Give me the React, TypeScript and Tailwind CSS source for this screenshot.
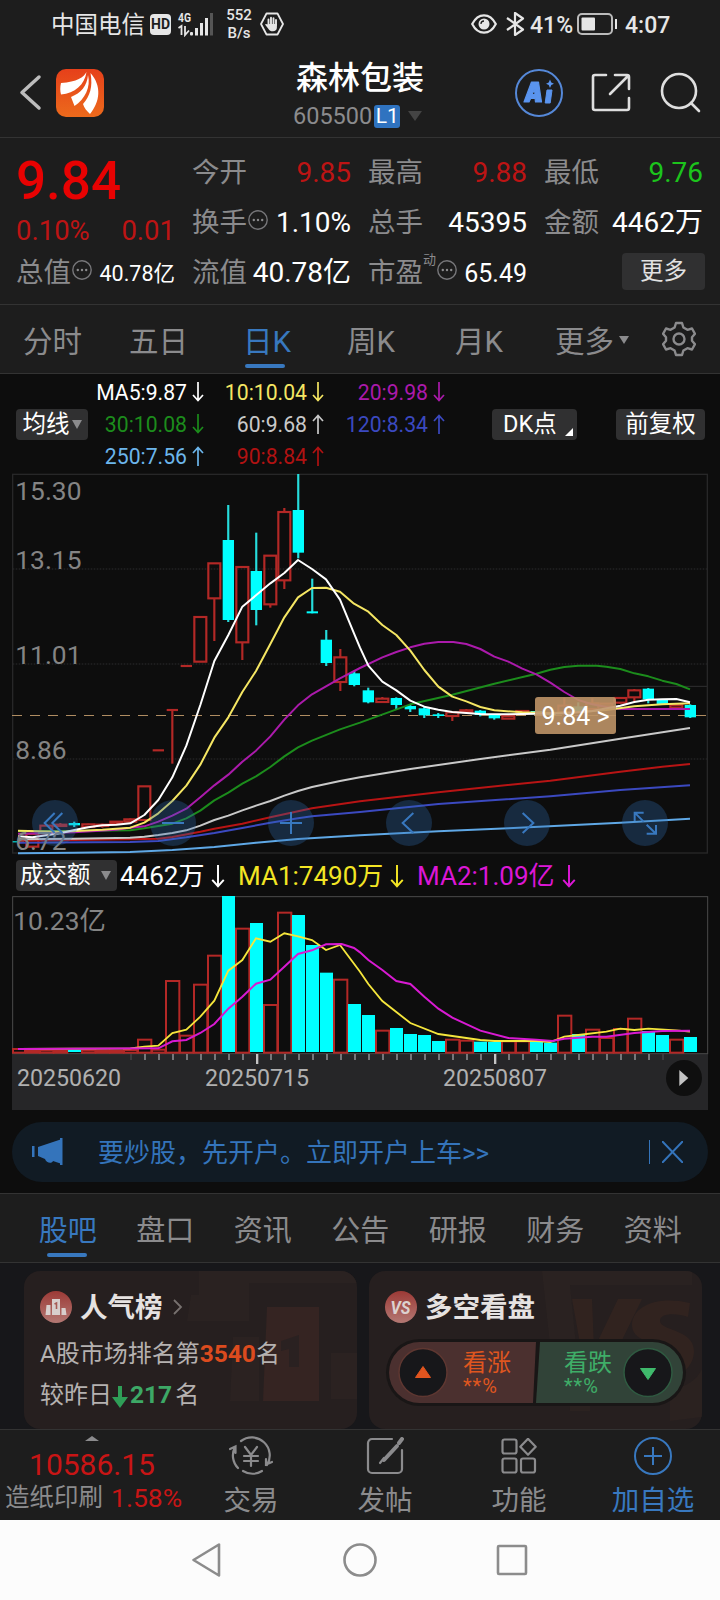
import React from "react";

type Pt = [number, number];

// Chart coordinates: three units per pixel, one candle every 42 units.
const X0 = 55;
const STEP = 42;
const cx = (i: number) => X0 + STEP * i;

const RED = "#b32826";
const CYAN = "#00ffff";

// [index, up, wickTop, bodyTop, bodyBottom, wickBottom]
const candles: [number, boolean, number, number, number, number][] = [
  [0, false, 1129, 1129, 1132, 1132],
  [1, true, 1105, 1107, 1145, 1148],
  [2, true, 1082, 1082, 1105, 1108],
  [3, true, 1074, 1079, 1083, 1086],
  [4, false, 1070, 1074, 1081, 1086],
  [5, true, 1076, 1078, 1086, 1088],
  [6, true, 1076, 1079, 1083, 1088],
  [7, true, 1068, 1070, 1076, 1078],
  [8, true, 1060, 1063, 1070, 1072],
  [9, true, 964, 964, 1065, 1065],
  [10, true, 856, 856, 856, 856],
  [11, true, 735, 735, 735, 896],
  [12, true, 603, 603, 603, 603],
  [13, true, 456, 456, 590, 590],
  [14, true, 295, 295, 400, 528],
  [15, false, 120, 225, 465, 471],
  [16, true, 306, 306, 532, 585],
  [17, false, 203, 318, 435, 481],
  [18, true, 272, 272, 418, 428],
  [19, true, 129, 141, 346, 372],
  [20, false, 27, 135, 263, 280],
  [21, false, 341, 439, 445, 445],
  [22, false, 495, 524, 594, 603],
  [23, true, 552, 577, 651, 678],
  [24, false, 618, 625, 660, 664],
  [25, false, 668, 676, 712, 715],
  [26, true, 696, 701, 711, 713],
  [27, false, 697, 699, 720, 732],
  [28, false, 720, 723, 733, 741],
  [29, false, 724, 730, 751, 759],
  [30, false, 744, 748, 753, 759],
  [31, true, 740, 742, 753, 768],
  [32, true, 732, 736, 741, 743],
  [33, false, 735, 737, 750, 754],
  [34, false, 747, 749, 760, 764],
  [35, true, 752, 753, 761, 762],
  [36, true, 736, 738, 742, 744],
  [37, false, 736, 738, 746, 748],
  [38, false, 742, 745, 750, 753],
  [39, true, 698, 722, 742, 745],
  [40, false, 712, 724, 738, 742],
  [41, true, 700, 715, 732, 735],
  [42, true, 715, 716, 724, 728],
  [43, true, 698, 699, 713, 716],
  [44, true, 672, 676, 697, 710],
  [45, false, 669, 671, 703, 715],
  [46, false, 705, 705, 718, 720],
  [47, true, 715, 720, 728, 733],
  [48, false, 718, 720, 757, 759],
];

const lines: { color: string; pts: Pt[] }[] = [
  {
    color: "#5fa8e6",
    pts: [[54, 1165], [223, 1163], [390, 1161], [517, 1155], [643, 1146], [768, 1133], [894, 1122], [1080, 1111], [1315, 1099], [1525, 1090], [1861, 1073], [2070, 1061]],
  },
  {
    color: "#3b49c0",
    pts: [[54, 1133], [390, 1131], [475, 1128], [559, 1117], [643, 1104], [727, 1089], [811, 1073], [894, 1060], [936, 1054], [1080, 1041], [1315, 1017], [1651, 994], [1861, 975], [2070, 961]],
  },
  {
    color: "#b81414",
    pts: [[54, 1127], [390, 1123], [475, 1121], [517, 1116], [601, 1100], [643, 1091], [727, 1076], [811, 1057], [894, 1039], [936, 1030], [1080, 1009], [1315, 982], [1651, 947], [1861, 920], [1987, 905], [2070, 897]],
  },
  {
    color: "#c9c9c9",
    pts: [[54, 1123], [223, 1121], [390, 1118], [433, 1115], [475, 1110], [517, 1104], [559, 1096], [601, 1082], [643, 1065], [685, 1052], [727, 1036], [768, 1022], [811, 1008], [853, 992], [894, 978], [936, 966], [1020, 948], [1080, 937], [1231, 912], [1441, 882], [1651, 854], [1861, 821], [1987, 802], [2070, 789]],
  },
  {
    color: "#1c8c1c",
    pts: [[54, 1099], [223, 1098], [391, 1096], [433, 1090], [475, 1083], [517, 1076], [559, 1060], [601, 1037], [643, 1006], [685, 983], [727, 956], [768, 934], [811, 906], [853, 874], [894, 847], [936, 827], [1020, 793], [1080, 773], [1231, 718], [1357, 689], [1483, 656], [1609, 626], [1651, 614], [1693, 606], [1735, 602], [1790, 602], [1819, 605], [1861, 612], [1903, 625], [1945, 634], [1987, 647], [2029, 657], [2070, 673]],
  },
  {
    color: "#ab1aab",
    pts: [[54, 1106], [223, 1102], [349, 1094], [391, 1088], [433, 1084], [475, 1070], [517, 1052], [559, 1031], [601, 997], [643, 961], [685, 929], [727, 890], [768, 857], [811, 814], [853, 764], [894, 721], [936, 688], [978, 664], [1020, 640], [1080, 609], [1147, 577], [1189, 561], [1231, 547], [1273, 536], [1315, 531], [1360, 531], [1399, 537], [1441, 552], [1483, 575], [1525, 590], [1567, 611], [1609, 628], [1651, 653], [1693, 681], [1735, 705], [1777, 718], [1819, 726], [1861, 732], [2070, 732]],
  },
  {
    color: "#f5e663",
    pts: [[54, 1097], [181, 1100], [307, 1094], [391, 1088], [433, 1073], [475, 1045], [517, 1008], [559, 962], [601, 899], [643, 818], [685, 757], [727, 681], [768, 618], [811, 537], [853, 457], [894, 397], [936, 369], [978, 368], [1020, 380], [1062, 416], [1105, 440], [1147, 480], [1189, 510], [1231, 557], [1273, 615], [1315, 665], [1357, 695], [1399, 709], [1441, 726], [1483, 736], [1567, 742], [1651, 744], [1735, 742], [1819, 735], [1903, 724], [1987, 718], [2070, 715]],
  },
  {
    color: "#ffffff",
    pts: [[54, 1114], [97, 1117], [139, 1111], [181, 1105], [223, 1095], [265, 1087], [307, 1081], [349, 1079], [391, 1075], [433, 1050], [475, 1005], [517, 937], [559, 842], [601, 720], [643, 588], [685, 510], [727, 425], [768, 391], [811, 355], [853, 324], [894, 285], [936, 312], [978, 343], [1020, 404], [1062, 505], [1080, 548], [1105, 602], [1147, 650], [1189, 676], [1231, 707], [1273, 725], [1315, 734], [1357, 741], [1441, 747], [1525, 748], [1609, 746], [1693, 745], [1777, 738], [1861, 722], [1903, 711], [1945, 704], [1987, 703], [2029, 702], [2070, 712]],
  },
];

// [top, up]
const volumes: [number, boolean][] = [
  [582, true], [587, true], [586, true], [587, true], [584, false], [586, true], [587, true],
  [587, true], [585, true], [554, true], [584, true], [378, true], [542, true], [389, true],
  [302, true], [123, false], [221, true], [204, false], [450, true], [173, true], [180, false],
  [270, false], [353, false], [374, true], [447, false], [480, false], [527, true], [519, false],
  [537, false], [540, false], [558, false], [554, true], [557, true], [560, false], [561, false],
  [559, true], [559, true], [557, false], [563, false], [482, true], [537, false], [524, true],
  [549, true], [522, true], [491, true], [528, false], [540, false], [554, true], [546, false],
];

const volYellow: Pt[] = [[54, 582], [391, 580], [433, 575], [475, 572], [517, 534], [559, 524], [601, 485], [643, 437], [685, 347], [727, 315], [768, 250], [811, 260], [853, 235], [894, 244], [936, 255], [978, 285], [1020, 270], [1080, 350], [1105, 387], [1147, 438], [1189, 471], [1231, 504], [1315, 537], [1399, 549], [1441, 555], [1483, 558], [1609, 558], [1651, 561], [1693, 545], [1735, 540], [1819, 530], [1861, 521], [1903, 525], [1945, 521], [2029, 526], [2070, 530]];
const volMagenta: Pt[] = [[54, 582], [475, 580], [517, 559], [559, 555], [601, 534], [643, 507], [685, 461], [727, 425], [768, 386], [811, 374], [853, 335], [894, 297], [936, 286], [978, 268], [1025, 267], [1062, 279], [1080, 292], [1105, 315], [1147, 345], [1189, 378], [1231, 387], [1273, 425], [1315, 461], [1357, 488], [1441, 527], [1525, 549], [1609, 554], [1657, 558], [1693, 551], [1777, 545], [1819, 545], [1903, 534], [1987, 528], [2070, 527]];

const toPoints = (pts: Pt[]) => pts.map((p) => p.join(",")).join(" ");

function StatusBar() {
  return (
    <div className="flex h-12 items-center pl-[51px] text-[#e6e6e6]">
      <span className="w-[99px] pt-[3px] text-[23.500px] leading-none">中国电信</span>
      <span className="flex h-[21px] w-[21px] items-center justify-center rounded-[4px] bg-[#e6e6e6] text-[14px] font-bold leading-none text-[#1d1d1d]">HD</span>
      <svg className="ml-[6px]" width="37" height="26" viewBox="0 0 37 26" fill="#e6e6e6">
        <text x="1" y="11" fontSize="13" fontWeight="700" textLength="13" lengthAdjust="spacingAndGlyphs">4G</text>
        <path d="M1.500 17l3-2v9M8 15v9l4-4.500" fill="none" stroke="#e6e6e6" strokeWidth="1.800" />
        <rect x="13" y="21" width="3" height="3.500" rx="1" />
        <rect x="18" y="17" width="3" height="7.500" />
        <rect x="23" y="12" width="3" height="12.500" />
        <rect x="28" y="7" width="3" height="17.500" />
        <rect x="33" y="2" width="3" height="22.500" fill="#555" />
      </svg>
      <div className="ml-[8px] w-[34px] text-center text-[15px] font-medium leading-[18px]">
        <div>552</div>
        <div>B/s</div>
      </div>
      <svg className="ml-[4px]" width="24" height="24" viewBox="0 0 24 24">
        <path d="M6.500 1.500h11L23 12l-5.500 10.500h-11L1 12z" fill="none" stroke="#e6e6e6" strokeWidth="1.800" strokeLinejoin="round" />
        <path d="M8.500 13V7.500M11 12V5.800M13.500 12V6.200M16 13V8" stroke="#e6e6e6" strokeWidth="1.900" strokeLinecap="round" />
        <path d="M7.600 12h9.300v3.500c0 2.500-1.600 3.800-4 3.800-2.200 0-3.400-.8-4.600-2.600L5 12.600c.6-1 1.700-.8 2.600.2z" fill="#e6e6e6" />
      </svg>
      <svg className="ml-[187px]" width="26" height="20" viewBox="0 0 26 20" fill="none" stroke="#e6e6e6" strokeWidth="2.200">
        <path d="M1.200 10C4 4.500 8 1.300 13 1.300S22 4.500 24.800 10C22 15.500 18 18.700 13 18.700S4 15.500 1.200 10z" />
        <circle cx="13" cy="10" r="5.500" fill="#e6e6e6" stroke="none" />
        <path d="M10 10a3 3 0 013-3" stroke="#1d1d1d" strokeWidth="1.300" />
      </svg>
      <svg className="ml-[8px]" width="20" height="24" viewBox="0 0 20 24" fill="none" stroke="#e6e6e6" strokeWidth="2.200">
        <path d="M2 6l16 11.500L10 23V1l8 5.500L2 18" strokeLinejoin="round" />
      </svg>
      <span className="ml-[5px] w-[47px] pt-[3px] text-[23px] font-medium leading-none">41%</span>
      <svg width="41" height="22" viewBox="0 0 41 22" fill="none" stroke="#e6e6e6">
        <rect x="1" y="1" width="34" height="20" rx="4" strokeWidth="2" stroke="#bbb" />
        <rect x="4.500" y="4.500" width="13.500" height="13" rx="1" fill="#e6e6e6" stroke="none" />
        <path d="M39 6v10" strokeWidth="2" />
      </svg>
      <span className="ml-[7px] pt-[3px] text-[23px] font-medium leading-none">4:07</span>
    </div>
  );
}

function Header() {
  return (
    <div className="flex h-[90px] items-start border-b border-[#333] text-[#ddd]">
      <svg className="ml-[19px] mt-[26px]" width="23" height="37" viewBox="0 0 23 37" fill="none" stroke="#bdbdbd" strokeWidth="3.500" strokeLinecap="round" strokeLinejoin="round">
        <path d="M20 3L3 18.500 20 34" />
      </svg>
      <svg className="ml-[14px] mt-[21px]" width="48" height="48" viewBox="0 0 48 48">
        <defs>
          <linearGradient id="logo" x1="0" y1="0" x2="0" y2="1">
            <stop offset="0" stopColor="#e6401a" />
            <stop offset="1" stopColor="#ec6a1c" />
          </linearGradient>
        </defs>
        <rect width="48" height="48" rx="10" fill="url(#logo)" />
        <path d="M30.500 3C28 8 21 13 5 14 4 18 4 22 5 25.500 19 24 28.500 16 30.500 3z" fill="#fff" />
        <path d="M32 6C31 17 25 24 15 28l3.500 9C29 30 35 18 32 6z" fill="#fff" />
        <path d="M34.500 4c2.500 14-.5 23-7.500 31 1 4 4 7 7 10 10-12 12-28 .5-41z" fill="#fff" />
      </svg>
      <div className="ml-[156px] flex w-[200px] flex-col items-center pt-[12px]">
        <div className="text-[32px] font-medium leading-[36px] text-white">森林包装</div>
        <div className="mt-[7px] flex h-[26px] w-[134px] items-center">
          <span className="pt-[2px] text-[23.500px] leading-none text-[#8b8b8d]">605500</span>
          <span className="ml-[2px] flex h-[23px] w-[26px] items-center justify-center rounded-[3px] bg-[#2f73c0] text-[21px] leading-none text-white">L1</span>
          <svg className="ml-[8px] shrink-0" width="14" height="10" viewBox="0 0 14 10"><path d="M0 0h14L7 10z" fill="#444" /></svg>
        </div>
      </div>
      <svg className="ml-[55px] mt-[21px]" width="48" height="48" viewBox="0 0 48 48">
        <circle cx="24" cy="24" r="23" fill="none" stroke="#5588d8" strokeWidth="2" />
        <path d="M9 33l7.500-20h7l3 20h-6l-.4-3.500h-4.500L14 33zM17 25.500h3l-.5-5z" fill="#5a94ee" stroke="#5a94ee" strokeWidth="1.200" strokeLinejoin="round" />
        <path d="M32 21h5l-1.800 13h-5z" fill="#5a94ee" stroke="#5a94ee" strokeWidth="1" strokeLinejoin="round" />
        <path d="M35 10.500l1.300 3L39 14.800l-2.700 1.300L35 19l-1.300-2.900L31 14.800l2.700-1.300z" fill="#5a94ee" />
      </svg>
      <svg className="ml-[28px] mt-[25px]" width="40" height="40" viewBox="0 0 40 40" fill="none" stroke="#dedede" strokeWidth="2.600" strokeLinecap="round">
        <path d="M15 2H4a2 2 0 00-2 2v31a2 2 0 002 2h32a2 2 0 002-2V25M24 2h12a2 2 0 012 2v12M37 3L19 21" />
      </svg>
      <svg className="ml-[29px] mt-[24px]" width="42" height="42" viewBox="0 0 42 42" fill="none" stroke="#dedede" strokeWidth="2.600" strokeLinecap="round">
        <circle cx="19" cy="19" r="17" />
        <path d="M31 31l8 8" />
      </svg>
    </div>
  );
}

function Info() {
  return (
    <svg width="20" height="20" viewBox="0 0 20 20" className="mx-[1px] mb-[7px] shrink-0">
      <circle cx="10" cy="10" r="9.200" fill="none" stroke="#77777a" strokeWidth="1.400" />
      <circle cx="5.800" cy="10" r="1.200" fill="#8b8b8d" />
      <circle cx="10" cy="10" r="1.200" fill="#8b8b8d" />
      <circle cx="14.200" cy="10" r="1.200" fill="#8b8b8d" />
    </svg>
  );
}

function Field({ label, value, tone = "text-white", info = false, sup, small = false }: { label: string; value: string; tone?: string; info?: boolean; sup?: string; small?: boolean }) {
  return (
    <div className="flex h-[50px] items-center whitespace-nowrap leading-none">
      <span className="-ml-px text-[27.500px] text-[#8b8b8d]">{label}</span>
      {sup && <span className="mb-[28px] text-[13px] text-[#8b8b8d]">{sup}</span>}
      {info && <Info />}
      <span className={`ml-auto ${small ? "text-[25px]" : "text-[28px]"} ${tone}`}>{value}</span>
    </div>
  );
}

function Quote() {
  return (
    <div className="grid h-[167px] grid-cols-[159px_158px_158px_158px] gap-x-[18px] border-b border-[#333] pl-4 pt-[10px]">
      <div className="leading-none">
        <div className="flex h-[66px] items-center pt-px text-[53px] font-medium text-[#e80202]">9.84</div>
        <div className="flex h-[34px] items-center justify-between text-[27.500px] text-[#bd1414]">
          <span>0.10%</span>
          <span>0.01</span>
        </div>
        <div className="flex h-[50px] items-center whitespace-nowrap">
          <span className="text-[27.500px] text-[#8b8b8d]">总值</span>
          <Info />
          <span className="ml-auto pt-[2px] text-[21.500px] text-white">40.78亿</span>
        </div>
      </div>
      <div>
        <Field label="今开" value="9.85" tone="text-[#bd1414]" />
        <Field label="换手" value="1.10%" info />
        <Field label="流值" value="40.78亿" />
      </div>
      <div>
        <Field label="最高" value="9.88" tone="text-[#bd1414]" />
        <Field label="总手" value="45395" />
        <Field label="市盈" value="65.49" info sup="动" small />
      </div>
      <div>
        <Field label="最低" value="9.76" tone="text-[#1cc41c]" />
        <Field label="金额" value="4462万" />
        <div className="ml-[77px] mt-[5px] flex h-[37px] w-[83px] items-center justify-center rounded-[4px] bg-[#303031] pt-px text-[23.500px] leading-none text-[#e2e2e2]">更多</div>
      </div>
    </div>
  );
}

function PeriodTabs() {
  return (
    <div className="flex h-[69px] items-start border-b border-[#333] pl-[23px] pt-[17px] text-[29.500px] leading-[40px] text-[#8b8b8d]">
      <span className="w-[106px]">分时</span>
      <span className="w-[114px]">五日</span>
      <span className="relative w-[104px] text-[#3878bf]">
        日K
        <i className="absolute left-[2px] top-[42px] h-[4px] w-[40px] rounded-full bg-[#3878bf]" />
      </span>
      <span className="w-[108px]">周K</span>
      <span className="w-[100px]">月K</span>
      <span className="flex w-[107px] items-center">
        更多
        <svg className="mb-[4px] ml-[5px]" width="10" height="8" viewBox="0 0 10 8"><path d="M0 0h10L5 8z" fill="#8b8b8d" /></svg>
      </span>
      <svg className="-mt-px" width="34" height="36" viewBox="0 0 34 36" fill="none" stroke="#8b8b8d" strokeWidth="2.400" strokeLinejoin="round">
        <path d="M14 2h6l1.400 4.500 4 2.300L30 7.500l3 5.300-3 3.500v3.400l3 3.500-3 5.300-4.600-1.300-4 2.300L20 34h-6l-1.400-4.500-4-2.300L4 28.500l-3-5.300 3-3.500v-3.400l-3-3.500 3-5.300 4.600 1.300 4-2.300z" />
        <circle cx="17" cy="18" r="5.500" />
      </svg>
    </div>
  );
}

function Arrow({ up = false, h = 20 }: { up?: boolean; h?: number }) {
  return (
    <svg width={h > 20 ? 14 : 12} height={h} viewBox="0 0 12 20" fill="none" stroke="currentColor" strokeWidth="1.700" className="shrink-0">
      <path d={up ? "M6 20V1.500M1 7l5-5.500L11 7" : "M6 0v18.500M1 13l5 5.500 5-5.500"} />
    </svg>
  );
}

function Ma({ text, up = false, tone }: { text: string; up?: boolean; tone: string }) {
  return (
    <span className={`flex items-center justify-end gap-[5px] ${tone}`}>
      <span className="pt-px">{text}</span>
      <Arrow up={up} />
    </span>
  );
}

function MaLegend() {
  return (
    <div className="flex h-[100px] items-center pl-4 leading-none">
      <div className="flex h-[31px] w-[72px] items-center justify-center gap-[2px] rounded-[4px] bg-[#303031] pt-px text-[23.500px] text-white">
        均线
        <svg width="10" height="9" viewBox="0 0 10 9"><path d="M0 0h10L5 9z" fill="#8b8b8d" /></svg>
      </div>
      <div className="grid h-[97px] grid-cols-[116px_120px_121px] grid-rows-3 text-[21.200px]">
        <Ma text="MA5:9.87" tone="text-white" />
        <Ma text="10:10.04" tone="text-[#f5e663]" />
        <Ma text="20:9.98" tone="text-[#ab1aab]" />
        <Ma text="30:10.08" tone="text-[#1c8c1c]" />
        <Ma text="60:9.68" up tone="text-[#c9c9c9]" />
        <Ma text="120:8.34" up tone="text-[#3b49c0]" />
        <Ma text="250:7.56" up tone="text-[#6cb6ec]" />
        <Ma text="90:8.84" up tone="text-[#b01212]" />
      </div>
      <div className="ml-[47px] flex h-[31px] w-[85px] items-center rounded-[4px] bg-[#303031] pl-[11px] pt-px text-[23.500px] text-white">
        DK点
        <svg className="ml-[8px] mt-[14px]" width="8" height="8" viewBox="0 0 9 9"><path d="M9 0v9H0z" fill="#fff" /></svg>
      </div>
      <div className="ml-[39px] flex h-[31px] w-[89px] items-center justify-center rounded-[4px] bg-[#303031] pt-px text-[23.500px] text-white">前复权</div>
    </div>
  );
}

const priceLabels: [string, number][] = [["15.30", 104], ["13.15", 311], ["11.01", 596], ["8.86", 881], ["6.72", 1156]];

function CandleChart() {
  return (
    <div className="relative h-[380px]">
      <svg className="block overflow-visible" width="720" height="380" viewBox="0 27 2160 1140">
        {[312, 597, 882].map((y) => (
          <line key={y} x1="38" x2="2122" y1={y} y2={y} stroke="#2d2d2e" strokeWidth="3" strokeDasharray="5 4" />
        ))}
        <line x1="1080" x2="2122" y1="664" y2="664" stroke="#303031" strokeWidth="3" />
        <rect x="38" y="28" width="2084" height="1136" fill="none" stroke="#272728" strokeWidth="4" />
        <line x1="36" x2="2122" y1="751.500" y2="751.500" stroke="#b08d62" strokeWidth="3.500" strokeDasharray="30 24" />
        {candles.map(([i, up, hi, top, bot, lo]) => {
          const x = cx(i);
          if (up) {
            const flat = bot - top < 3;
            return (
              <g key={i} stroke={RED} strokeWidth="6.500" fill="none">
                {hi < top && <line x1={x} x2={x} y1={hi} y2={top} />}
                {flat ? <line x1={x - 17} x2={x + 17} y1={top} y2={top} /> : <rect x={x - 18} y={top} width="36" height={bot - top} />}
                {lo > bot && <line x1={x} x2={x} y1={bot} y2={lo} />}
              </g>
            );
          }
          return (
            <g key={i} fill={CYAN}>
              <rect x={x - 3.5} y={hi} width="6.500" height={lo - hi} fill="#26dcdc" />
              <rect x={x - 17} y={top} width="34" height={bot - top} />
            </g>
          );
        })}
        {lines.map((l) => (
          <polyline key={l.color} points={toPoints(l.pts)} fill="none" stroke={l.color} strokeWidth="6" strokeLinejoin="round" />
        ))}
        {priceLabels.map(([t, y]) => (
          <text key={t} x="46" y={y} fontSize="79" fill="#848484">{t}</text>
        ))}
        {[165, 519, 873, 1227, 1581, 1935].map((x) => (
          <circle key={x} cx={x} cy="1074" r="69" fill="#2e6eb4" fillOpacity="0.3" />
        ))}
        <g fill="none" stroke="#3878bf" strokeWidth="6">
          <path d="M164 1044l-30 30 30 30M187 1044l-30 30 30 30M486 1074h66M840 1074h66M873 1041v66M1240 1044l-32 30 32 30M1568 1044l32 30-32 30" />
          <path d="M1904 1068v-25h27M1904 1043l27 27M1968 1080v26h-28M1968 1106l-28-27" />
        </g>
      </svg>
      <div className="absolute left-[535px] top-[223px] flex h-[37px] w-[81px] items-center justify-center rounded-[3px] bg-[#be9467]/90 pt-px text-[25px] leading-none text-white">
        9.84 &gt;
      </div>
    </div>
  );
}

function VolumeLegend() {
  return (
    <div className="flex h-[42px] items-center whitespace-nowrap pl-[16px] text-[26px] leading-none">
      <div className="flex h-[31px] w-[101px] items-center gap-[10px] rounded-[4px] bg-[#303031] pl-[4px] pt-px text-[23.500px] text-white">
        成交额
        <svg width="10" height="9" viewBox="0 0 10 9"><path d="M0 0h10L5 9z" fill="#8b8b8d" /></svg>
      </div>
      <span className="ml-[3px] flex w-[118px] items-center gap-[7px] pt-[2px] text-white">4462万<Arrow h={23} /></span>
      <span className="flex w-[179px] items-center gap-[7px] pt-[2px] text-[#f3e524]">MA1:7490万<Arrow h={23} /></span>
      <span className="flex items-center gap-[7px] pt-[2px] text-[#dc17d6]">MA2:1.09亿<Arrow h={23} /></span>
    </div>
  );
}

function VolumeChart() {
  const ticks = Array.from({ length: 39 }, (_, k) => 393 + 42 * k);
  return (
    <svg className="block" width="720" height="214" viewBox="0 123 2160 642">
      <rect x="36" y="597" width="2096" height="168" fill="#262628" />
      <rect x="2124" y="597" width="36" height="168" fill="#0d0d0d" />
      <rect x="38" y="125" width="2085" height="471" fill="none" stroke="#4a4a4a" strokeWidth="3" />
      {volumes.map(([top, up], i) => {
        const x = cx(i);
        return up ? (
          <rect key={i} x={Math.max(x - 19, 39)} y={top} width={x - 19 < 39 ? 36 : 40} height={593 - top} fill="none" stroke={RED} strokeWidth="6" />
        ) : (
          <rect key={i} x={x - 19} y={top} width="39" height={591 - top} fill={CYAN} />
        );
      })}
      <polyline points={toPoints(volYellow)} fill="none" stroke="#f5e63c" strokeWidth="5.500" />
      <polyline points={toPoints(volMagenta)} fill="none" stroke="#d81ad2" strokeWidth="6" />
      <text x="40" y="226" fontSize="79" fill="#848484">10.23亿</text>
      {ticks.map((x) => {
        const major = x === 771 || x === 1485;
        return <rect key={x} x={x - 3} y="597" width={major ? 7 : 6} height={major ? 30 : 18} fill={major ? "#c4c4c4" : x === 393 || x === 1989 ? "#3c3c3e" : "#77777a"} />;
      })}
      <g fontSize="69.500" fill="#b0b0b0">
        <text x="51" y="692">20250620</text>
        <text x="615" y="692">20250715</text>
        <text x="1329" y="692">20250807</text>
      </g>
      <circle cx="2052" cy="669" r="54" fill="#0f0f0f" />
      <path d="M2038 645v48l27-24z" fill="#c4c4c4" />
    </svg>
  );
}

function Banner() {
  return (
    <div className="flex h-[83px] items-start px-3 pt-[12px]">
      <div className="flex h-[60px] w-full items-center rounded-full bg-[#111b24] pl-[20px] leading-none text-[#3474bb]">
        <svg width="31" height="28" viewBox="0 0 31 28" fill="#3474bb">
          <rect x="0" y="8" width="2.500" height="11" />
          <path d="M6 9L30 1v25l-9-3c-1 3-7 2-8-2l-7-3z" />
          <path d="M28 0h2.500v27H28z" />
        </svg>
        <span className="ml-[35px] whitespace-nowrap pt-px text-[26px]">要炒股，先开户。立即开户上车&gt;&gt;</span>
        <span className="ml-auto h-[24px] w-px bg-[#3474bb]" />
        <svg className="ml-[12px] mr-[25px]" width="21" height="22" viewBox="0 0 21 22" stroke="#3474bb" strokeWidth="2"><path d="M0 0l21 22M21 0L0 22" /></svg>
      </div>
    </div>
  );
}

function NewsTabs() {
  const tabs = ["股吧", "盘口", "资讯", "公告", "研报", "财务", "资料"];
  return (
    <div className="flex h-[70px] border-b border-t border-[#333] bg-[#1d1d1d] pl-[19px] pt-[17px] text-[29px] leading-[40px] text-[#8b8b8d]">
      {tabs.map((t, i) => (
        <span key={t} className={`relative w-[97.500px] text-center ${i === 0 ? "text-[#3878bf]" : ""}`}>
          {t}
          {i === 0 && <i className="absolute left-[28px] top-[42px] h-[4px] w-[40px] rounded-full bg-[#3878bf]" />}
        </span>
      ))}
    </div>
  );
}

function Cards() {
  return (
    <div className="flex h-[166px] gap-3 overflow-hidden bg-[#17171a] pl-6 pt-2 text-[#b5b1b0]">
      <div className="relative h-[158px] w-[333px] shrink-0 overflow-hidden rounded-[16px] bg-[#261f1f] pl-4 pt-[16px] leading-none">
        <svg className="absolute right-0 top-0" width="180" height="158" viewBox="0 0 180 158">
          <path d="M22 0h158v12H72v38H10l4-26h8z" fill="#2a2221" />
          <path d="M90 36h52v94H86z" fill="#352422" />
          <path d="M56 66h26v64H53zM154 82h26v46h-26z" fill="#2b2221" />
          <path d="M104 70l18-6v32h-10V78l-8 2z" fill="#2a2121" />
        </svg>
        <div className="relative flex h-[40px] items-center">
          <svg width="32" height="32" viewBox="0 0 32 32">
            <defs>
              <linearGradient id="badge" x1="0" y1="0" x2="0" y2="1">
                <stop offset="0" stopColor="#9c3a36" />
                <stop offset="1" stopColor="#b37873" />
              </linearGradient>
            </defs>
            <circle cx="16" cy="16" r="16" fill="url(#badge)" />
            <path d="M6.500 14h4v10h-5zM12 8h8v16h-8zM21.500 17h4l1 7h-5z" fill="#d8cfcd" />
            <path d="M14.500 13l2-1v6" fill="none" stroke="#a65b56" strokeWidth="1.600" />
          </svg>
          <span className="ml-[8px] pt-px text-[27.500px] font-bold text-[#e6e2e1]">人气榜</span>
          <svg className="ml-[10px]" width="10" height="16" viewBox="0 0 10 16" fill="none" stroke="#77716f" strokeWidth="1.800"><path d="M1 1l7 7-7 7" /></svg>
        </div>
        <div className="relative mt-[7px] flex h-[40px] items-center whitespace-nowrap text-[24px]">
          A股市场排名第<b className="text-[24.500px] font-bold text-[#dc4b1e]">3540</b>名
        </div>
        <div className="relative mt-px flex h-[40px] items-center whitespace-nowrap text-[24px]">
          较昨日
          <svg className="mt-[4px]" width="16" height="22" viewBox="0 0 16 22" fill="#2f9e57"><path d="M6 0h4v11h6l-8 11-8-11h6z" /></svg>
          <b className="ml-[2px] mr-[3px] text-[24.500px] font-bold text-[#3da866]">217</b>名
        </div>
      </div>
      <div className="relative h-[158px] w-[333px] shrink-0 overflow-hidden rounded-[16px] bg-[#261f1f] pl-4 pt-[16px] leading-none">
        <svg className="absolute right-0 top-0" width="160" height="158" viewBox="0 0 160 158">
          <path d="M0 0h150v14H28l6 60H8z" fill="#2a2221" />
          <path d="M30 28h20l2 50 24-50h24L62 106H44z" fill="#31231f" />
          <path d="M148 32c-34-8-58 4-58 22 0 20 34 16 34 28 0 10-22 8-38 2v22c30 10 66 0 66-26 0-22-34-20-34-30 0-8 16-8 28-4z" fill="#31231f" />
          <path d="M26 106h22v34H28zM128 118c16-2 26-8 32-20v48l-32 4z" fill="#2b2220" />
        </svg>
        <div className="relative flex h-[40px] items-center">
          <svg width="32" height="32" viewBox="0 0 32 32">
            <circle cx="16" cy="16" r="16" fill="url(#badge)" />
            <text x="5.500" y="22.500" fontSize="18" fontWeight="700" fontStyle="italic" fill="#dcd2d0" textLength="20" lengthAdjust="spacingAndGlyphs">VS</text>
          </svg>
          <span className="ml-[8px] pt-[2px] text-[27.500px] font-bold text-[#e6e2e1]">多空看盘</span>
        </div>
        <div className="relative ml-[1px] mt-[12px] flex h-[67px] w-[300px] items-center rounded-full bg-[#191616] p-[3px]">
          <svg className="absolute left-[3px] top-[3px]" width="294" height="61" viewBox="0 0 294 61">
            <path d="M30.500 0H147l-3 61H30.500a30.500 30.500 0 010-61z" fill="#4b302f" />
            <path d="M151 0h112.500a30.500 30.500 0 010 61H147z" fill="#314338" />
            <circle cx="34" cy="30.500" r="24" fill="#17171a" stroke="#5e3731" strokeWidth="1.500" />
            <path d="M34 24.500l7.500 11h-15z" fill="#e2551f" stroke="#e2551f" strokeLinejoin="round" />
            <circle cx="259" cy="30.500" r="24" fill="#17171a" stroke="#2f5a41" strokeWidth="1.500" />
            <path d="M259 37.500l-7.500-11h15z" fill="#3fba6c" stroke="#3fba6c" strokeLinejoin="round" />
          </svg>
          <div className="relative ml-[74px] flex flex-col text-[#df561f]">
            <span className="text-[24px] leading-[26px]">看涨</span>
            <span className="text-[20px] leading-[20px] tracking-[1px]">**%</span>
          </div>
          <div className="relative ml-[53px] flex flex-col text-[#3fae68]">
            <span className="text-[24px] leading-[26px]">看跌</span>
            <span className="text-[20px] leading-[20px] tracking-[1px]">**%</span>
          </div>
        </div>
      </div>
    </div>
  );
}

function BottomBar() {
  return (
    <div className="flex h-[91px] border-t border-[#333] bg-[#1d1d1d] leading-none text-[#8b8b8d]">
      <div className="flex w-[184px] flex-col items-center">
        <svg className="mt-[6px]" width="14" height="5" viewBox="0 0 14 5"><path d="M0 5h14L7 0z" fill="#8b8b8d" /></svg>
        <div className="mt-[6px] flex h-[36px] items-center text-[30px] text-[#c81515]">10586.15</div>
        <div className="flex h-[30px] items-center self-start whitespace-nowrap pl-[5px] text-[24.500px]">
          造纸印刷<span className="ml-[8px] text-[26.500px] text-[#c81515]">1.58%</span>
        </div>
      </div>
      {[
        {
          label: "交易",
          icon: (
            <svg width="44" height="40" viewBox="0 0 44 40" fill="none" stroke="currentColor" strokeWidth="2.200" strokeLinecap="round">
              <path d="M9 32A18 18 0 016 11M1 13l5.500-2.500V17M12 5a18 18 0 0126 24M43 26l-6 2.500V23M33 35a18 18 0 01-19 0" />
              <path d="M16 11l6 8 6-8M15 20h14M15 25h14M22 19v11" />
            </svg>
          ),
        },
        {
          label: "发帖",
          icon: (
            <svg width="38" height="38" viewBox="0 0 38 38" fill="none" stroke="currentColor" strokeWidth="2.200" strokeLinecap="round">
              <path d="M26 2H6a4 4 0 00-4 4v26a4 4 0 004 4h26a4 4 0 004-4V13" />
              <path d="M36 2l-3 4" strokeWidth="4" />
              <path d="M31 9L18 23" strokeWidth="4" />
              <path d="M18 21l-4 5" />
            </svg>
          ),
        },
        {
          label: "功能",
          icon: (
            <svg width="36" height="36" viewBox="0 0 36 36" fill="none" stroke="currentColor" strokeWidth="2.200">
              <rect x="1.500" y="1.500" width="14" height="14" rx="2" />
              <rect x="1.500" y="20.500" width="14" height="14" rx="2" />
              <rect x="20" y="20.500" width="14" height="14" rx="2" />
              <path d="M27 .8l7.700 8L27 16.800l-7.700-8z" strokeLinejoin="round" />
            </svg>
          ),
        },
        {
          label: "加自选",
          active: true,
          icon: (
            <svg width="38" height="38" viewBox="0 0 38 38" fill="none" stroke="currentColor" strokeWidth="2">
              <circle cx="19" cy="19" r="18" />
              <path d="M19 10v18M10 19h18" />
            </svg>
          ),
        },
      ].map((item) => (
        <div key={item.label} className={`flex w-[134px] flex-col items-center ${item.active ? "text-[#3878bf]" : ""}`}>
          <div className="flex h-[53px] items-center">{item.icon}</div>
          <div className="flex h-[40px] items-center text-[27.500px]">{item.label}</div>
        </div>
      ))}
    </div>
  );
}

function SystemNav() {
  return (
    <div className="flex h-[80px] items-center justify-center bg-[#fcfcfc]">
      <svg width="336" height="36" viewBox="0 0 336 36" fill="none" stroke="#8c8c8c" strokeWidth="2.600" strokeLinejoin="round">
        <path d="M27 2.500v31L1.500 18z" />
        <circle cx="168" cy="18" r="15.500" />
        <rect x="306" y="4" width="28" height="28" rx="1" />
      </svg>
    </div>
  );
}

export default function App() {
  return (
    <div className="h-[1600px] w-[720px] overflow-hidden bg-[#0d0d0d] font-['Roboto','Noto_Sans_CJK_SC',sans-serif]">
      <div className="bg-[#1d1d1d]">
        <StatusBar />
        <Header />
        <Quote />
        <PeriodTabs />
      </div>
      <MaLegend />
      <CandleChart />
      <VolumeLegend />
      <VolumeChart />
      <Banner />
      <NewsTabs />
      <Cards />
      <BottomBar />
      <SystemNav />
    </div>
  );
}
